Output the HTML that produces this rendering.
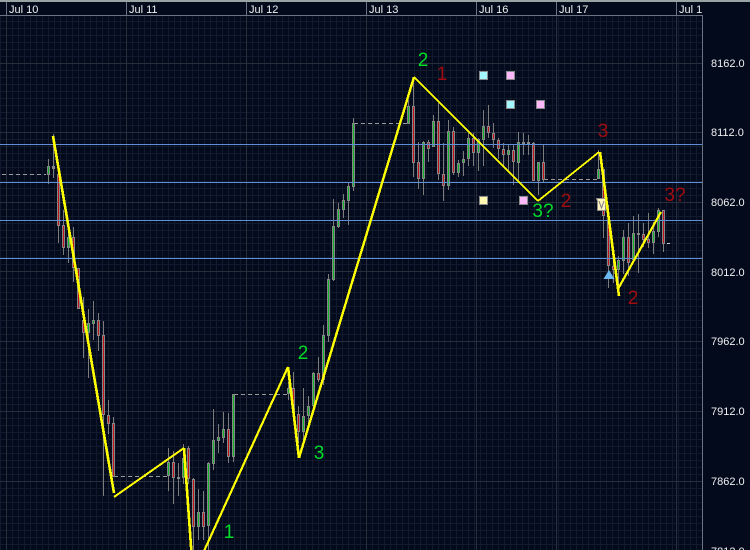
<!DOCTYPE html>
<html>
<head>
<meta charset="utf-8">
<style>
html,body{margin:0;padding:0;background:#020a1c;}
svg{display:block;}
text{font-family:"Liberation Sans",sans-serif;}
.a{fill:#f0f0f0;font-size:11px;}
.g{fill:#00dc28;font-size:19px;text-anchor:middle;}
.r{fill:#a00c10;font-size:19px;text-anchor:middle;}
</style>
</head>
<body>
<svg width="750" height="550" viewBox="0 0 750 550" xmlns="http://www.w3.org/2000/svg">
<defs>
<pattern id="v" patternUnits="userSpaceOnUse" x="0" y="0" width="6" height="550"><rect x="0" y="0" width="1" height="550" fill="#121b2e"/></pattern>
</defs>
<rect width="750" height="550" fill="#020a1c"/>
<rect x="0" y="16" width="702" height="534" fill="url(#v)"/>
<path shape-rendering="crispEdges" stroke="#121b2e" fill="none" d="M0 21.5H702M0 28.5H702M0 35.5H702M0 42.5H702M0 49.5H702M0 56.5H702M0 70.5H702M0 77.5H702M0 84.5H702M0 91.5H702M0 98.5H702M0 105.5H702M0 112.5H702M0 118.5H702M0 125.5H702M0 139.5H702M0 146.5H702M0 153.5H702M0 160.5H702M0 167.5H702M0 174.5H702M0 181.5H702M0 188.5H702M0 195.5H702M0 209.5H702M0 216.5H702M0 223.5H702M0 230.5H702M0 237.5H702M0 243.5H702M0 250.5H702M0 257.5H702M0 264.5H702M0 278.5H702M0 285.5H702M0 292.5H702M0 299.5H702M0 306.5H702M0 313.5H702M0 320.5H702M0 327.5H702M0 334.5H702M0 348.5H702M0 355.5H702M0 362.5H702M0 369.5H702M0 376.5H702M0 383.5H702M0 390.5H702M0 397.5H702M0 404.5H702M0 418.5H702M0 425.5H702M0 432.5H702M0 439.5H702M0 446.5H702M0 453.5H702M0 460.5H702M0 467.5H702M0 474.5H702M0 488.5H702M0 495.5H702M0 502.5H702M0 509.5H702M0 516.5H702M0 523.5H702M0 530.5H702M0 537.5H702M0 544.5H702"/>
<path shape-rendering="crispEdges" stroke="#282e3c" fill="none" d="M0 63.5H702M0 132.5H702M0 202.5H702M0 271.5H702M0 341.5H702M0 411.5H702M0 481.5H702M6.5 16V550M126.5 16V550M246.5 16V550M366.5 16V550M476.5 16V550M556.5 16V550M676.5 16V550"/>
<rect x="0" y="0" width="750" height="2" fill="#98a4a4"/>
<path shape-rendering="crispEdges" stroke="#6c7484" fill="none" d="M0 15.500H702.500M702.500 15V550M6.500 2V15M126.500 2V15M246.500 2V15M366.500 2V15M476.500 2V15M556.500 2V15M676.500 2V15"/>

<g class="a">
<text class="a" x="9" y="13">Jul 10</text>
<text class="a" x="129" y="13">Jul 11</text>
<text class="a" x="249" y="13">Jul 12</text>
<text class="a" x="369" y="13">Jul 13</text>
<text class="a" x="479" y="13">Jul 16</text>
<text class="a" x="559" y="13">Jul 17</text>
<text class="a" x="679" y="13">Jul 1</text>
<text class="a" x="711" y="67">8162.0</text>
<text class="a" x="711" y="136">8112.0</text>
<text class="a" x="711" y="206">8062.0</text>
<text class="a" x="711" y="276">8012.0</text>
<text class="a" x="711" y="345">7962.0</text>
<text class="a" x="711" y="415">7912.0</text>
<text class="a" x="711" y="485">7862.0</text>
<text class="a" x="711" y="555">7812.0</text>
</g>

<!-- dashed reference lines -->
<path shape-rendering="crispEdges" stroke="#9a9a9a" stroke-dasharray="4 3" fill="none" d="M2 174.500H46M114 476.500H167M234 394.500H287M354 123.500H407M544 179.500H597"/>
<path shape-rendering="crispEdges" stroke="#cccccc" fill="none" d="M667 243.500H670"/>

<!-- wicks -->
<path shape-rendering="crispEdges" stroke="#7c7c7c" fill="none" d="M48.500 159V184M53.500 134V178M58.500 174V243M63.500 210V255M68.500 233V263M73.500 227V282M78.500 268V309M83.500 297V358M88.500 309V378M93.500 301V340M98.500 313V351M103.500 321V496M108.500 400V434M113.500 417V477M168.500 448V491M173.500 451V504M178.500 463V496M183.500 444V484M188.500 446V484M193.500 478V550M198.500 489V540M203.500 491V540M208.500 462V550M213.500 409V470M218.500 424V453M223.500 412V443M228.500 413V463M233.500 394V462M288.500 382V400M293.500 372V413M298.500 406V443M303.500 388V443M308.500 396V427M313.500 372V407M318.500 357V382M323.500 325V385M328.500 274V342M333.500 199V281M338.500 203V228M343.500 194V218M348.500 183V225M353.500 118V191M408.500 100V124M413.500 77V177M418.500 142V189M423.500 141V195M428.500 140V162M433.500 115V147M438.500 103V180M443.500 143V201M448.500 120V190M453.500 127V175M458.500 160V177M463.500 151V176M468.500 133V166M473.500 133V166M478.500 138V171M483.500 110V166M488.500 105V138M493.500 123V148M498.500 138V159M503.500 143V167M508.500 145V170M513.500 144V185M518.500 132V180M523.500 133V155M528.500 135V155M533.500 142V181M538.500 162V195M543.500 145V183M598.500 150V179M603.500 169V238M608.500 205V288M613.500 257V283M618.500 256V287M623.500 230V274M628.500 223V276M633.500 216V263M638.500 214V273M643.500 223V247M648.500 213V248M653.500 222V254M658.500 208V237M663.500 210V252"/>

<!-- bodies -->
<path shape-rendering="crispEdges" fill="#868686" d="M47 166h3v9h-3zM52 166h3v3h-3zM57 174h3v52h-3zM62 225h3v23h-3zM67 237h3v11h-3zM72 237h3v31h-3zM77 268h3v41h-3zM82 320h3v13h-3zM87 323h3v10h-3zM92 320h3v4h-3zM97 320h3v16h-3zM102 335h3v80h-3zM107 415h3v9h-3zM112 423h3v54h-3zM167 462h3v14h-3zM172 462h3v16h-3zM177 477h3v2h-3zM182 458h3v20h-3zM187 448h3v31h-3zM192 479h3v48h-3zM197 512h3v15h-3zM202 512h3v15h-3zM207 463h3v63h-3zM212 440h3v24h-3zM217 437h3v4h-3zM222 429h3v9h-3zM227 429h3v28h-3zM232 394h3v63h-3zM287 388h3v6h-3zM292 388h3v25h-3zM297 414h3v18h-3zM302 416h3v16h-3zM307 406h3v10h-3zM312 373h3v33h-3zM317 373h3v7h-3zM322 335h3v45h-3zM327 279h3v57h-3zM332 226h3v54h-3zM337 209h3v18h-3zM342 200h3v10h-3zM347 186h3v15h-3zM352 123h3v64h-3zM407 106h3v18h-3zM412 106h3v57h-3zM417 162h3v17h-3zM422 142h3v37h-3zM427 142h3v7h-3zM432 121h3v26h-3zM437 121h3v53h-3zM442 174h3v12h-3zM447 131h3v55h-3zM452 131h3v42h-3zM457 163h3v10h-3zM462 159h3v4h-3zM467 138h3v21h-3zM472 138h3v15h-3zM477 139h3v14h-3zM482 126h3v14h-3zM487 126h3v7h-3zM492 133h3v7h-3zM497 140h3v9h-3zM502 149h3v6h-3zM507 150h3v5h-3zM512 150h3v12h-3zM517 142h3v21h-3zM522 142h3v2h-3zM527 142h3v2h-3zM532 143h3v38h-3zM537 162h3v19h-3zM542 162h3v18h-3zM597 169h3v10h-3zM602 169h3v47h-3zM607 220h3v46h-3zM612 266h3v4h-3zM617 260h3v10h-3zM622 237h3v24h-3zM627 237h3v26h-3zM632 233h3v27h-3zM637 233h3v2h-3zM642 234h3v6h-3zM647 239h3v4h-3zM652 231h3v12h-3zM657 210h3v22h-3zM662 210h3v34h-3z"/>
<path shape-rendering="crispEdges" stroke="#c01018" fill="none" d="M58.500 175V225M63.500 226V247M73.500 238V267M78.500 269V308M83.500 321V332M98.500 321V335M103.500 336V414M108.500 416V423M113.500 424V476M173.500 463V477M188.500 449V478M193.500 480V526M203.500 513V526M228.500 430V456M293.500 389V412M298.500 415V431M318.500 374V379M413.500 107V162M418.500 163V178M428.500 143V148M438.500 122V173M443.500 175V185M453.500 132V172M473.500 139V152M488.500 127V132M493.500 134V139M498.500 141V148M503.500 150V154M513.500 151V161M533.500 144V180M543.500 163V179M603.500 170V215M608.500 221V265M613.500 267V269M628.500 238V262M643.500 235V239M648.500 240V242M663.500 211V243"/>
<path shape-rendering="crispEdges" stroke="#10b428" fill="none" d="M48.500 167V174M68.500 238V247M88.500 324V332M93.500 321V323M168.500 463V475M183.500 459V477M198.500 513V526M208.500 464V525M213.500 441V463M218.500 438V440M223.500 430V437M233.500 395V456M288.500 389V393M303.500 417V431M308.500 407V415M313.500 374V405M323.500 336V379M328.500 280V335M333.500 227V279M338.500 210V226M343.500 201V209M348.500 187V200M353.500 124V186M408.500 107V123M423.500 143V178M433.500 122V146M448.500 132V185M458.500 164V172M463.500 160V162M468.500 139V158M478.500 140V152M483.500 127V139M508.500 151V154M518.500 143V162M538.500 163V180M598.500 170V178M618.500 261V269M623.500 238V260M633.500 234V259M653.500 232V242M658.500 211V231"/>

<!-- blue lines -->
<path shape-rendering="crispEdges" stroke="#5f8fd8" fill="none" d="M0 144.500H702M0 182.500H702M0 220.500H702M0 258.500H702"/>

<!-- markers -->
<g stroke="#8a8a8a" stroke-width="1" shape-rendering="crispEdges">
<rect x="479.500" y="71.500" width="8" height="8" fill="#a4f6ff"/>
<rect x="506.500" y="71.500" width="8" height="8" fill="#ffb8fa"/>
<rect x="506.500" y="100.500" width="8" height="8" fill="#a4f6ff"/>
<rect x="536.500" y="100.500" width="8" height="8" fill="#ffb8fa"/>
<rect x="479.500" y="196.500" width="8" height="8" fill="#fff8b0"/>
<rect x="519.500" y="196.500" width="8" height="8" fill="#ffb8fa"/>
</g>
<path d="M596.500 198.500H607L605.500 201V210.500H597.500V201Z" fill="#fff4c0" stroke="#8a8a8a"/>
<path d="M599 201L601.500 208L604 201" fill="none" stroke="#777"/>
<path d="M609 270L614.500 279H603.500Z" fill="#6cb8f2"/>

<!-- yellow zigzag -->
<g fill="none" stroke="#ffff00" shape-rendering="crispEdges">
<path stroke-width="2.600" d="M53 136L114 493"/>
<path stroke-width="2" d="M114 497L184 448"/>
<path stroke-width="2.600" d="M184 448L192 560"/>
<path stroke-width="2.200" d="M199 562L288 367"/>
<path stroke-width="2.600" d="M288 367L299 458"/>
<path stroke-width="2.400" d="M299 458L414 77"/>
<path stroke-width="1.800" d="M414 77L538 201"/>
<path stroke-width="1.800" d="M538 201L599 152"/>
<path stroke-width="2.600" d="M600 152L619 296"/>
<path stroke-width="2.200" d="M618 289L661 212"/>
</g>

<!-- labels -->
<text class="g" x="423" y="66">2</text>
<text class="r" x="442" y="80">1</text>
<text class="r" x="603" y="137">3</text>
<text class="r" x="566" y="207">2</text>
<text class="g" x="543" y="217">3?</text>
<text class="r" x="675" y="201">3?</text>
<text class="r" x="633" y="304">2</text>
<text class="g" x="229" y="538">1</text>
<text class="g" x="303" y="359">2</text>
<text class="g" x="319" y="459">3</text>
</svg>
</body>
</html>
